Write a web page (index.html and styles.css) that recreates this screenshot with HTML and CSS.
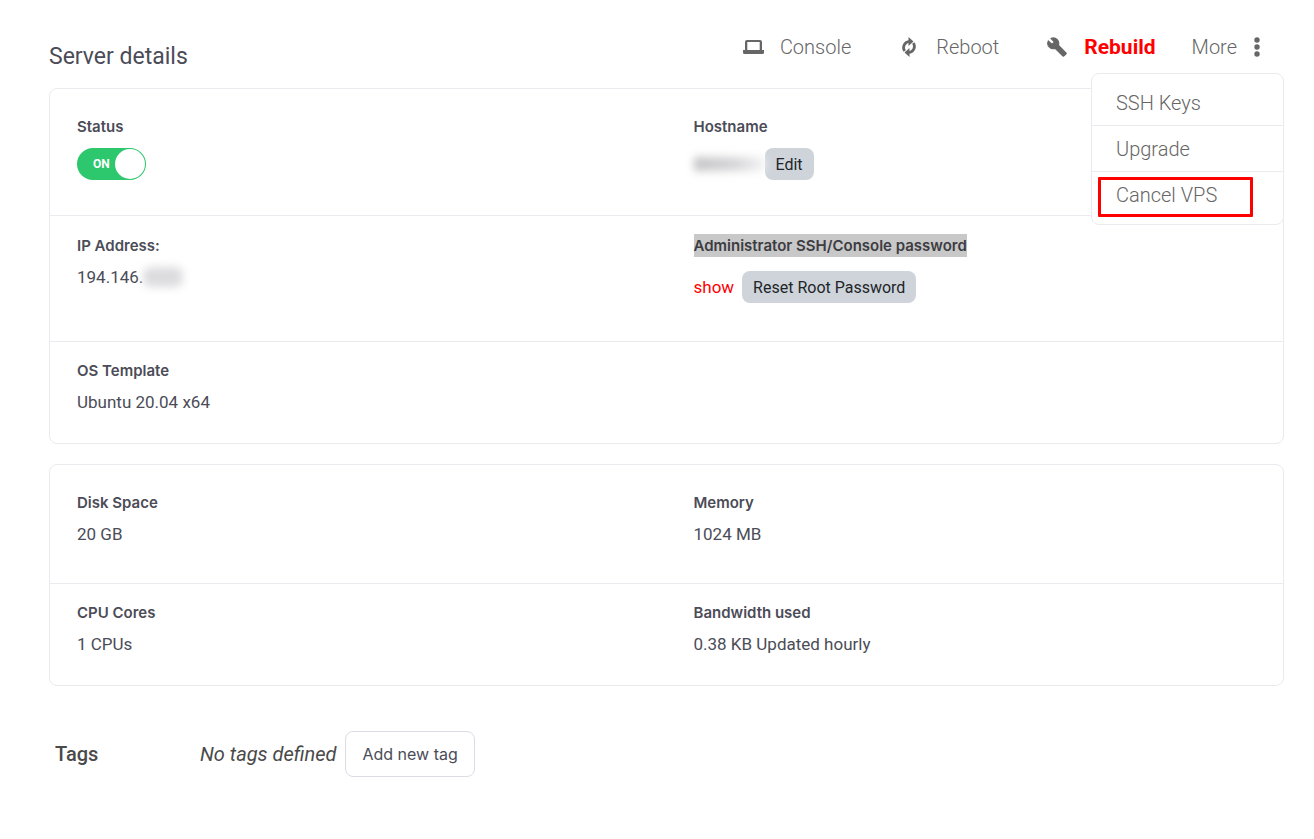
FILE: index.html
```
<!DOCTYPE html>
<html lang="en">
<head>
    <meta charset="UTF-8">
    <meta name="viewport" content="width=device-width, initial-scale=1.0">
    <title>Server details</title>
    <link rel="stylesheet" href="styles.css">
</head>
<body>

    <!-- Title and actions -->
    <header class="top">
        <h1>Server details</h1>
        <nav class="actions">
            <a class="action console" href="#">
                <svg width="21" height="16" viewBox="0 0 21 16"><path fill="#666" fill-rule="evenodd" d="M4 1h13a2 2 0 0 1 2 2v8h2v2.500a1.500 1.500 0 0 1-1.500 1.500h-18A1.500 1.500 0 0 1 0 13.500V11h2V3a2 2 0 0 1 2-2zm.3 2v8h12.400V3z"/></svg>
                <span>Console</span>
            </a>
            <a class="action reboot" href="#">
                <svg width="16" height="20" viewBox="0 0 16 20"><g fill="none" stroke="#666" stroke-width="2.700"><path d="M3.700 14A6 6 0 0 1 8.500 4.500"/><path d="M12.300 6A6 6 0 0 1 7.500 15.500"/></g><path fill="#666" d="M7.500 0l5 4.500-5 4.500zM8.500 20l-5-4.500 5-4.500z"/></svg>
                <span>Reboot</span>
            </a>
            <a class="action rebuild" href="#">
                <svg width="20" height="20" viewBox="0 0 24 24"><path fill="#666" stroke="#666" stroke-width="1.400" stroke-linejoin="round" d="M22.700 19l-9.100-9.100c.9-2.300.4-5-1.500-6.900-2-2-5-2.400-7.400-1.300L9 6 6 9 1.600 4.700C.4 7.100.9 10.100 2.900 12.100c1.900 1.900 4.600 2.400 6.900 1.500l9.100 9.100c.4.4 1 .4 1.400 0l2.300-2.300c.5-.4.5-1.100.1-1.400z"/></svg>
                <span>Rebuild</span>
            </a>
            <div class="more">
                <button type="button" class="action more-button">
                    <span>More</span>
                    <svg width="6" height="20" viewBox="0 0 6 20"><g fill="#666"><circle cx="3" cy="3" r="2.700"/><circle cx="3" cy="10" r="2.700"/><circle cx="3" cy="17" r="2.700"/></g></svg>
                </button>
                <div class="menu">
                    <a href="#">SSH Keys</a>
                    <a href="#">Upgrade</a>
                    <a class="marked" href="#">Cancel VPS</a>
                </div>
            </div>
        </nav>
    </header>

    <!-- Server info -->
    <section class="card">
        <div class="row first">
            <div class="cell">
                <h2>Status</h2>
                <label class="toggle">
                    <input type="checkbox" aria-label="Status" checked>
                    <span class="toggle-text">ON</span>
                    <span class="knob"></span>
                </label>
            </div>
            <div class="cell">
                <h2>Hostname</h2>
                <div class="value controls">
                    <span class="hidden-host"></span>
                    <button type="button" class="gray-button">Edit</button>
                </div>
            </div>
        </div>
        <div class="row">
            <div class="cell">
                <h2>IP Address:</h2>
                <div class="value ip">194.146.<span class="hidden-ip"></span></div>
            </div>
            <div class="cell">
                <h2><span class="selected">Administrator SSH/Console password</span></h2>
                <div class="value controls password">
                    <a class="show" href="#">show</a>
                    <button type="button" class="gray-button">Reset Root Password</button>
                </div>
            </div>
        </div>
        <div class="row last">
            <div class="cell">
                <h2>OS Template</h2>
                <div class="value">Ubuntu 20.04 x64</div>
            </div>
        </div>
    </section>

    <!-- Resources -->
    <section class="card">
        <div class="row first">
            <div class="cell">
                <h2>Disk Space</h2>
                <div class="value">20 GB</div>
            </div>
            <div class="cell">
                <h2>Memory</h2>
                <div class="value">1024 MB</div>
            </div>
        </div>
        <div class="row last">
            <div class="cell">
                <h2>CPU Cores</h2>
                <div class="value">1 CPUs</div>
            </div>
            <div class="cell">
                <h2>Bandwidth used</h2>
                <div class="value">0.38 KB Updated hourly</div>
            </div>
        </div>
    </section>

    <!-- Tags -->
    <section class="tags">
        <h3>Tags</h3>
        <em>No tags defined</em>
        <button type="button" class="add-tag">Add new tag</button>
    </section>

</body>
</html>
```
FILE: styles.css
```
/* General */
* {
    box-sizing: border-box;
}

body {
    margin: 0;
    padding: 28px 30px 40px 49px;
    background: #fff;
    color: #4b4c57;
    font-family: Roboto, "Liberation Sans", sans-serif;
}

h1, h2, h3 {
    margin: 0;
}

a {
    color: inherit;
    text-decoration: none;
}

button {
    font-family: inherit;
    cursor: pointer;
}

/* Title and actions */
.top {
    display: flex;
    justify-content: space-between;
    align-items: flex-start;
    height: 60px;
}

h1 {
    padding-top: 15px;
    font-size: 23px;
    line-height: 28px;
    font-weight: 400;
}

.actions {
    display: flex;
    line-height: 38px;
    color: #666;
}

.action {
    display: flex;
    align-items: center;
    font-size: 20px;
    font-weight: 300;
}

.console {
    gap: 16px;
    margin-right: 50px;
}

.reboot {
    gap: 19px;
    margin-right: 48px;
}

.rebuild {
    gap: 17px;
    margin-right: 36px;
}

.rebuild span {
    color: #f00;
    font-size: 21px;
    font-weight: 700;
}

.more {
    position: relative;
    padding-right: 24px;
}

.more-button {
    gap: 17px;
    height: 38px;
    padding: 0;
    border: 0;
    background: none;
    color: inherit;
}

/* Dropdown */
.menu {
    position: absolute;
    top: 45px;
    right: 0;
    z-index: 2;
    width: 193px;
    padding: 6px 0;
    border: 1px solid #ebebef;
    border-radius: 8px;
    background: #fff;
    font-size: 20px;
    font-weight: 300;
}

.menu a {
    position: relative;
    display: block;
    height: 46px;
    padding: 0 24px;
    line-height: 46px;
    border-bottom: 1px solid #ebebef;
}

.menu a:last-child {
    border-bottom: 0;
}

.marked::after {
    content: "";
    position: absolute;
    inset: 5px 30px 1px 6px;
    border: 3px solid #f00;
    border-radius: 1px;
}

/* Cards */
.card {
    margin-bottom: 20px;
    border: 1px solid #ebebef;
    border-radius: 8px;
}

.row {
    display: grid;
    grid-template-columns: 1fr 1fr;
    padding: 18px 0 38px;
    border-bottom: 1px solid #ebebef;
}

.row.first {
    padding: 26px 0 35px;
}

.row.last {
    padding: 17px 0 30px;
    border-bottom: 0;
}

.cell {
    padding: 0 27px;
}

h2 {
    margin-bottom: 10px;
    font-family: Inter, Roboto, sans-serif;
    font-size: 15px;
    line-height: 23px;
    font-weight: 600;
}

.value {
    min-height: 24px;
    font-size: 17px;
    line-height: 21px;
}

.row.last .value {
    min-height: 21px;
}

.controls {
    display: flex;
    align-items: center;
}

.password {
    gap: 8px;
    padding-top: 4px;
}

.selected {
    display: inline-block;
    background: #c8c8c8;
    color: #3c3c42;
}

.show {
    color: #f00;
}

.gray-button {
    height: 32px;
    padding: 0 11px;
    border: 0;
    border-radius: 8px;
    background: #ced4da;
    color: #212529;
    font-size: 16px;
}

/* Status switch */
.toggle {
    display: flex;
    align-items: center;
    justify-content: space-between;
    width: 69px;
    height: 32px;
    padding: 0 1px 0 16px;
    border-radius: 16px;
    background: #2dc76d;
    color: #fff;
    font-size: 12px;
    font-weight: 700;
    cursor: pointer;
}

.toggle input {
    position: absolute;
    opacity: 0;
}

.knob {
    width: 30px;
    height: 30px;
    border-radius: 50%;
    background: #fff;
}

/* Blurred private values */
.hidden-host {
    width: 71px;
    height: 14px;
    background: linear-gradient(90deg, #c4c4c6, #d6d6d9 60%, #f5f5f7);
    filter: blur(4px);
}

.ip {
    display: flex;
    align-items: flex-start;
}

.hidden-ip {
    width: 40px;
    height: 20px;
    border-radius: 8px;
    background: #dcdcdf;
    filter: blur(4px);
}

/* Tags */
.tags {
    display: flex;
    align-items: center;
    padding: 25px 0 0 6px;
    color: #4a4a4a;
    font-size: 20px;
}

h3 {
    width: 145px;
    font-size: 20px;
    font-weight: 500;
}

.add-tag {
    height: 46px;
    margin-left: 9px;
    padding: 0 16px;
    border: 1px solid #dcdce6;
    border-radius: 8px;
    background: #fff;
    color: #4b4c57;
    font-family: Inter, Roboto, sans-serif;
    font-size: 16px;
}
```
